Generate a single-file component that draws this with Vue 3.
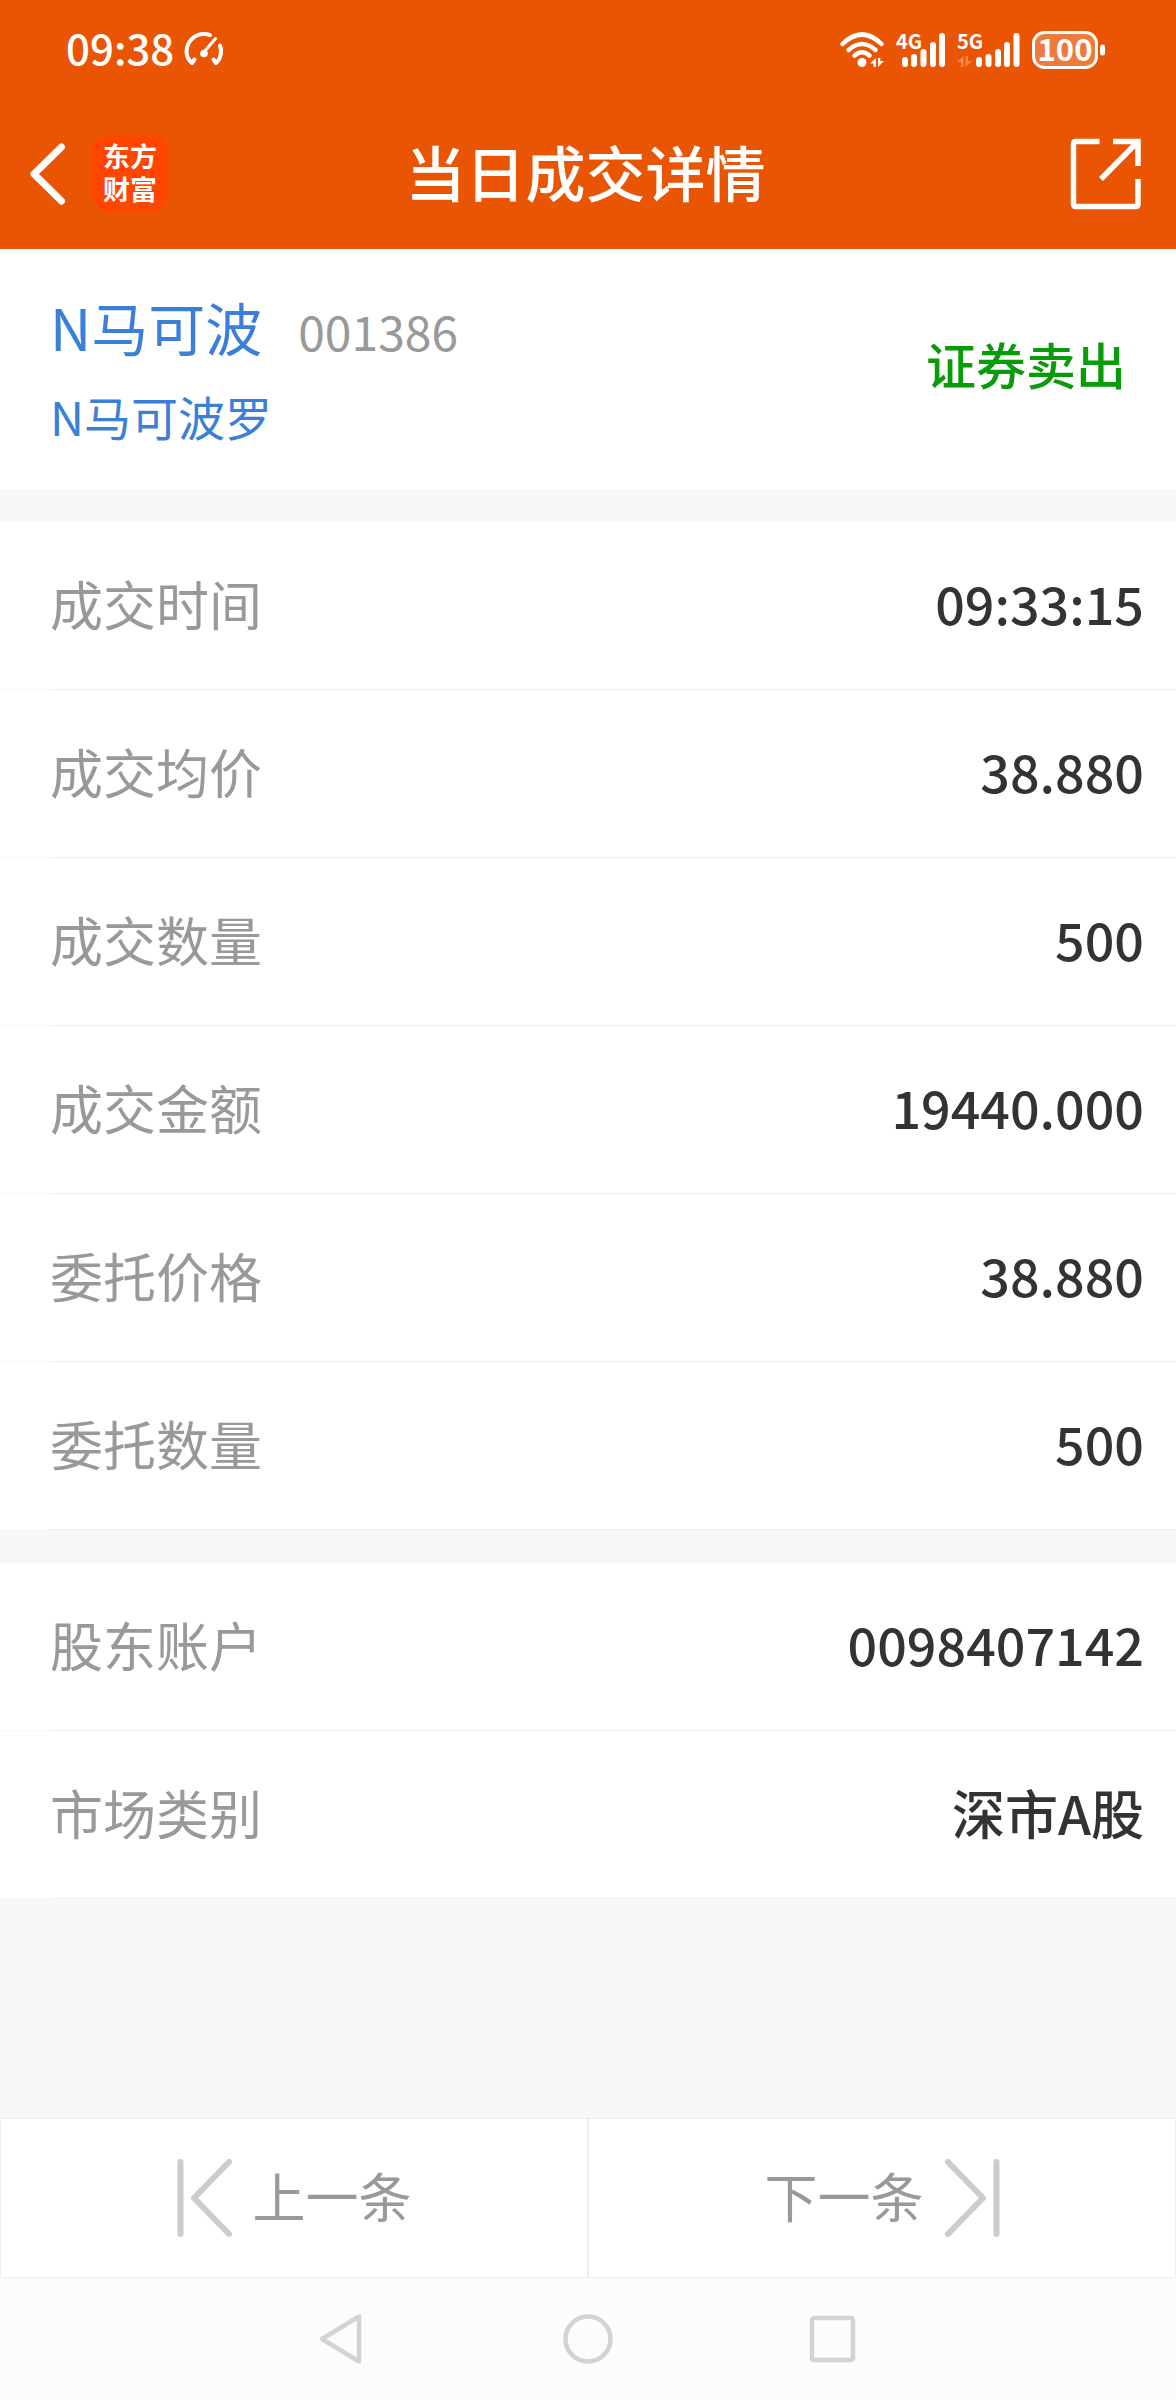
<script setup>
const tradeRows = [
  { label: '成交时间', value: '09:33:15' },
  { label: '成交均价', value: '38.880' },
  { label: '成交数量', value: '500' },
  { label: '成交金额', value: '19440.000' },
  { label: '委托价格', value: '38.880' },
  { label: '委托数量', value: '500' },
]
const accountRows = [
  { label: '股东账户', value: '0098407142' },
  { label: '市场类别', value: '深市A股', text: true },
]
const groups = [tradeRows, accountRows]
</script>

<template>
  <div class="page">
    <header class="header">
      <div class="status">
        <div class="status-left">
          <span class="clock">09:38</span>
          <svg class="gauge" width="40" height="40" viewBox="0 0 40 40" fill="none" stroke="#fff" stroke-width="4" stroke-linecap="round" stroke-linejoin="round">
            <path d="M10.500 29.500 L8 33 C4 29.500 2.500 26 2.500 22 C2.500 11.500 10.500 4 20 4 C22.500 4 24 4.300 26 5" />
            <path d="M36 15.500 C37.500 19 37.500 22 36.500 25.500 C35.500 29 34 31.500 32 33 L29.500 29.500" />
            <path d="M20 22 L31.500 8.500" stroke-width="3" />
            <circle cx="20" cy="23.500" r="3.800" fill="#fff" stroke="none" />
          </svg>
        </div>
        <div class="status-right">
          <svg width="44" height="36" viewBox="0 0 44 36" fill="none" stroke="#fff" stroke-width="4.500" stroke-linecap="round">
            <path d="M2.500 12 Q22 -7 41.500 12" />
            <path d="M8.500 18 Q22 6 35.500 18" />
            <path d="M14.500 23.500 Q22 17 29.500 23.500" />
            <circle cx="22" cy="30.500" r="4.500" fill="#fff" stroke="none" />
            <path d="M30 31.500 L36 26 V35 H33.500 V31.500 Z M38 26 L40.300 26 V29 H44 L38 35 Z" fill="#fff" stroke="none" />
          </svg>
          <svg width="49" height="36" viewBox="0 0 49 36">
            <text x="0" y="17" class="net">4G</text>
            <g stroke="#fff" stroke-width="6" stroke-linecap="round">
              <path d="M9 28 V32 M18 25 V32 M27.500 20 V32 M37 13 V32 M46 4 V32" />
            </g>
          </svg>
          <svg width="63" height="36" viewBox="0 0 63 36">
            <text x="0" y="17" class="net">5G</text>
            <path d="M0 30 L6.500 24 V35 H4 V30 Z M8.500 24 H11 V29 H15 L8.500 35 Z" fill="#f8864c" />
            <g stroke="#fff" stroke-width="6" stroke-linecap="round">
              <path d="M22 28 V32 M31.500 25 V32 M41 20 V32 M50 13 V32 M59.500 4 V32" />
            </g>
          </svg>
          <svg width="74" height="38" viewBox="0 0 74 38">
            <rect x="1.500" y="1.500" width="63" height="35" rx="11" fill="#fff" fill-opacity=".22" stroke="#fff" stroke-width="3" />
            <rect x="68" y="13.500" width="5" height="11" rx="2.500" fill="#fff" />
            <text x="33" y="30" class="charge">100</text>
          </svg>
        </div>
      </div>
      <div class="bar">
        <div class="bar-left">
          <button class="plain" aria-label="返回">
            <svg width="36" height="62" viewBox="0 0 36 62" fill="none" stroke="#fff" stroke-width="7" stroke-linecap="round" stroke-linejoin="round">
              <path d="M32.500 4 L5 31 L32.500 58" />
            </svg>
          </button>
          <div class="logo">东方<br />财富</div>
        </div>
        <h1 class="title">当日成交详情</h1>
        <button class="plain share" aria-label="分享">
          <svg width="72" height="72" viewBox="0 0 72 72" fill="none" stroke="#fff" stroke-width="5.500">
            <path d="M29.500 3.500 H6 Q3.500 3.500 3.500 6 V66 Q3.500 68.500 6 68.500 H65.500 Q68 68.500 68 66 V41" />
            <path d="M43 3.500 H68 V28 M67 4.500 L31 41" />
          </svg>
        </button>
      </div>
    </header>

    <main class="content">
      <section class="summary">
        <div>
          <div class="name-line"><span class="name">N马可波</span><span class="code">001386</span></div>
          <div class="full-name">N马可波罗</div>
        </div>
        <strong class="side">证券卖出</strong>
      </section>

      <dl v-for="(rows, i) in groups" :key="i" class="group">
        <div v-for="row in rows" :key="row.label" class="row">
          <dt>{{ row.label }}</dt>
          <dd :class="{ text: row.text }">{{ row.value }}</dd>
        </div>
      </dl>
    </main>

    <nav class="pager">
      <button>
        <svg width="56" height="78" viewBox="0 0 56 78" fill="none" stroke="#ccc" stroke-width="6" stroke-linecap="round" stroke-linejoin="round">
          <path d="M3.500 3 V75 M52 3 L17 39 L52 75" />
        </svg>
        <span>上一条</span>
      </button>
      <button>
        <span>下一条</span>
        <svg width="56" height="78" viewBox="0 0 56 78" fill="none" stroke="#ccc" stroke-width="6" stroke-linecap="round" stroke-linejoin="round">
          <path d="M52.500 3 V75 M4 3 L39 39 L4 75" />
        </svg>
      </button>
    </nav>

    <nav class="system">
      <button class="plain" aria-label="后退">
        <svg width="50" height="50" viewBox="0 0 50 50" fill="none" stroke="#d3d3d3" stroke-width="4.500" stroke-linejoin="round">
          <path d="M4 25 L41 2.500 V47.500 Z" />
        </svg>
      </button>
      <button class="plain" aria-label="主屏幕">
        <svg width="50" height="50" viewBox="0 0 50 50" fill="none" stroke="#d3d3d3" stroke-width="4.500">
          <circle cx="25" cy="25" r="22.500" />
        </svg>
      </button>
      <button class="plain" aria-label="最近任务">
        <svg width="50" height="50" viewBox="0 0 50 50" fill="none" stroke="#d3d3d3" stroke-width="4.500">
          <rect x="4" y="4" width="41" height="42" rx="2" />
        </svg>
      </button>
    </nav>
  </div>
</template>

<style>
body {
  margin: 0;
}
</style>

<style scoped>
.page {
  display: flex;
  flex-direction: column;
  min-height: 100vh;
  background: #f7f8fa;
  color: #333;
  font-family: "Noto Sans CJK SC", sans-serif;
}
svg {
  display: block;
  flex: none;
  overflow: visible;
}
button {
  font-family: inherit;
  cursor: pointer;
}
.plain {
  padding: 0;
  border: 0;
  background: none;
}

.header {
  background: #ea5504;
  color: #fff;
}
.status {
  display: flex;
  justify-content: space-between;
  align-items: center;
  height: 100px;
  padding: 0 70px 0 66px;
}
.status-left,
.status-right {
  display: flex;
  align-items: center;
}
.status-left {
  gap: 10px;
}
.clock {
  padding-bottom: 6px;
  font-size: 42px;
  line-height: 60px;
  font-weight: 500;
}
.status-right {
  gap: 12px;
}
.net,
.charge {
  fill: #fff;
  font-family: "Noto Sans CJK SC", sans-serif;
  font-weight: 700;
}
.net {
  font-size: 20px;
}
.charge {
  font-size: 31px;
  text-anchor: middle;
}
.bar {
  display: grid;
  grid-template-columns: 1fr auto 1fr;
  align-items: center;
  box-sizing: border-box;
  height: 149px;
  padding: 0 34px 2px 29px;
}
.bar-left {
  display: flex;
  align-items: center;
  gap: 27px;
}
.logo {
  box-sizing: border-box;
  width: 76px;
  height: 76px;
  padding-top: 3px;
  border-radius: 17px;
  background: #ff4500;
  font-size: 27px;
  line-height: 33px;
  font-weight: 700;
  text-align: center;
}
.title {
  margin: 0;
  padding-bottom: 6px;
  font-size: 60px;
  line-height: 80px;
  font-weight: 500;
}
.share {
  justify-self: end;
}

.content {
  flex: 1;
}
.summary {
  display: flex;
  justify-content: space-between;
  align-items: center;
  padding: 37px 50px 43px 50px;
  background: #fff;
}
.name-line {
  display: flex;
  align-items: baseline;
  gap: 36px;
  margin-bottom: 20px;
  line-height: 80px;
}
.name,
.full-name {
  color: #3a80d8;
}
.name {
  font-size: 57px;
}
.code {
  color: #999;
  font-size: 48px;
  line-height: 60px;
}
.full-name {
  font-size: 47px;
  line-height: 60px;
}
.side {
  padding-bottom: 6px;
  color: #0a9b0a;
  font-size: 50px;
  line-height: 60px;
  font-weight: 500;
}

.group {
  margin: 33px 0 0;
}
.row {
  display: flex;
  justify-content: space-between;
  align-items: center;
  box-sizing: border-box;
  height: 168px;
  padding: 0 32px 6px 50px;
  border-bottom: 1px solid;
  border-image: linear-gradient(to right, #f7f8fa 50px, #ededef 50px) 1;
  background: #fff;
  line-height: 80px;
}
dt {
  color: #999;
  font-size: 53px;
}
dd {
  margin: 0;
  font-size: 52px;
  font-weight: 500;
}
dd.text {
  font-size: 53px;
}

.pager {
  display: flex;
}
.pager button {
  display: flex;
  flex: 1;
  align-items: center;
  justify-content: center;
  gap: 20px;
  box-sizing: border-box;
  height: 160px;
  padding: 0;
  border: 1px solid #ededed;
  background: #fff;
  color: #999;
  font-size: 53px;
  line-height: 80px;
}
.pager span {
  padding-bottom: 6px;
}

.system {
  display: flex;
  padding: 0 18.75%;
  background: #fcfcfc;
}
.system button {
  display: flex;
  flex: 1;
  align-items: center;
  justify-content: center;
  height: 122px;
}
</style>
